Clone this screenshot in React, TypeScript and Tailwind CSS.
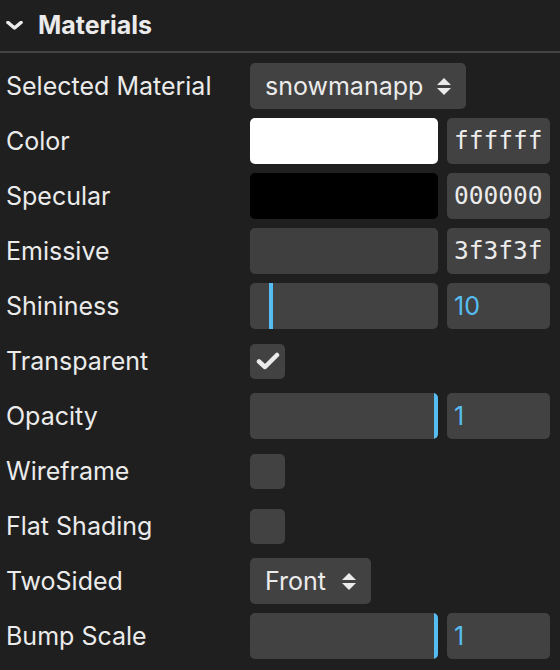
import React from "react";

const sans = { fontFamily: "Inter, 'Noto Sans', sans-serif" };

const Arrows = () => (
	<svg width="14" height="17" viewBox="0 0 14 17" className="shrink-0">
		<polygon points="7,0 14,7 0,7" fill="#ebebeb" />
		<polygon points="0,10 14,10 7,17" fill="#ebebeb" />
	</svg>
);

const Row = ({ label, children }: { label: string; children?: React.ReactNode }) => (
	<div className="flex h-[46px] items-center">
		<div className="w-[250px] shrink-0 pl-[6px] text-[25px] leading-none text-[#ebebeb]">
			{label}
		</div>
		<div className="flex h-full items-center">{children}</div>
	</div>
);

const Select = ({ value, gap }: { value: string; gap: string }) => (
	<div className={`flex h-[46px] items-center rounded-[5px] bg-[#424242] px-[15px] ${gap}`}>
		<span className="text-[25px] leading-none text-[#ebebeb]">{value}</span>
		<Arrows />
	</div>
);

const ColorRow = ({ color, hex }: { color: string; hex: string }) => (
	<>
		<div className="h-[46px] w-[188px] rounded-[5px]" style={{ background: color }} />
		<div className="ml-[9px] flex h-[46px] w-[103px] items-center overflow-hidden rounded-[5px] bg-[#424242] pl-[7px] font-['DejaVu_Sans_Mono',monospace] text-[24.5px] leading-none text-[#ebebeb]">
			{hex}
		</div>
	</>
);

const Slider = ({ offset, value }: { offset: number; value: string }) => (
	<>
		<div className="flex h-[46px] w-[188px] overflow-hidden rounded-[5px] bg-[#424242]">
			<div className="h-full shrink-0" style={{ width: offset }} />
			<div className="h-full w-[4px] shrink-0 bg-[#56bdf2]" />
		</div>
		<div className="ml-[9px] flex h-[46px] w-[103px] items-center rounded-[5px] bg-[#424242] pl-[7px] text-[25px] leading-none text-[#56bdf2]">
			{value}
		</div>
	</>
);

const Checkbox = ({ checked }: { checked?: boolean }) => (
	<div className="flex h-[35px] w-[35px] items-center justify-center rounded-[5px] bg-[#424242]">
		{checked && (
			<svg width="24" height="18" viewBox="0 0 24 18">
				<path d="M3 9.5 L9 15 L21 3" fill="none" stroke="#ebebeb" strokeWidth="4.5" strokeLinecap="round" strokeLinejoin="round" />
			</svg>
		)}
	</div>
);

export default function App() {
	return (
		<div className="h-[670px] w-[560px] overflow-hidden bg-[#1f1f1f]" style={sans}>
			<div className="flex h-[51px] items-center gap-[15px] pl-[6px]">
				<svg width="17" height="9" viewBox="0 0 17 9">
					<path d="M2 1.5 L8.5 7 L15 1.5" fill="none" stroke="#ebebeb" strokeWidth="3.6" strokeLinecap="round" strokeLinejoin="round" />
				</svg>
				<span className="text-[25px] font-bold leading-none text-[#ebebeb]">Materials</span>
			</div>
			<div className="h-[2px] bg-[#444444]" />

			<div className="flex flex-col gap-[9px] pt-[10px]">
				<Row label="Selected Material">
					<Select value="snowmanapp" gap="gap-[14px]" />
				</Row>
				<Row label="Color">
					<ColorRow color="#ffffff" hex="ffffff" />
				</Row>
				<Row label="Specular">
					<ColorRow color="#000000" hex="000000" />
				</Row>
				<Row label="Emissive">
					<ColorRow color="#3f3f3f" hex="3f3f3f" />
				</Row>
				<Row label="Shininess">
					<Slider offset={19} value="10" />
				</Row>
				<Row label="Transparent">
					<Checkbox checked />
				</Row>
				<Row label="Opacity">
					<Slider offset={183.5} value="1" />
				</Row>
				<Row label="Wireframe">
					<Checkbox />
				</Row>
				<Row label="Flat Shading">
					<Checkbox />
				</Row>
				<Row label="TwoSided">
					<Select value="Front" gap="gap-[16px]" />
				</Row>
				<Row label="Bump Scale">
					<Slider offset={183.5} value="1" />
				</Row>
			</div>
		</div>
	);
}
